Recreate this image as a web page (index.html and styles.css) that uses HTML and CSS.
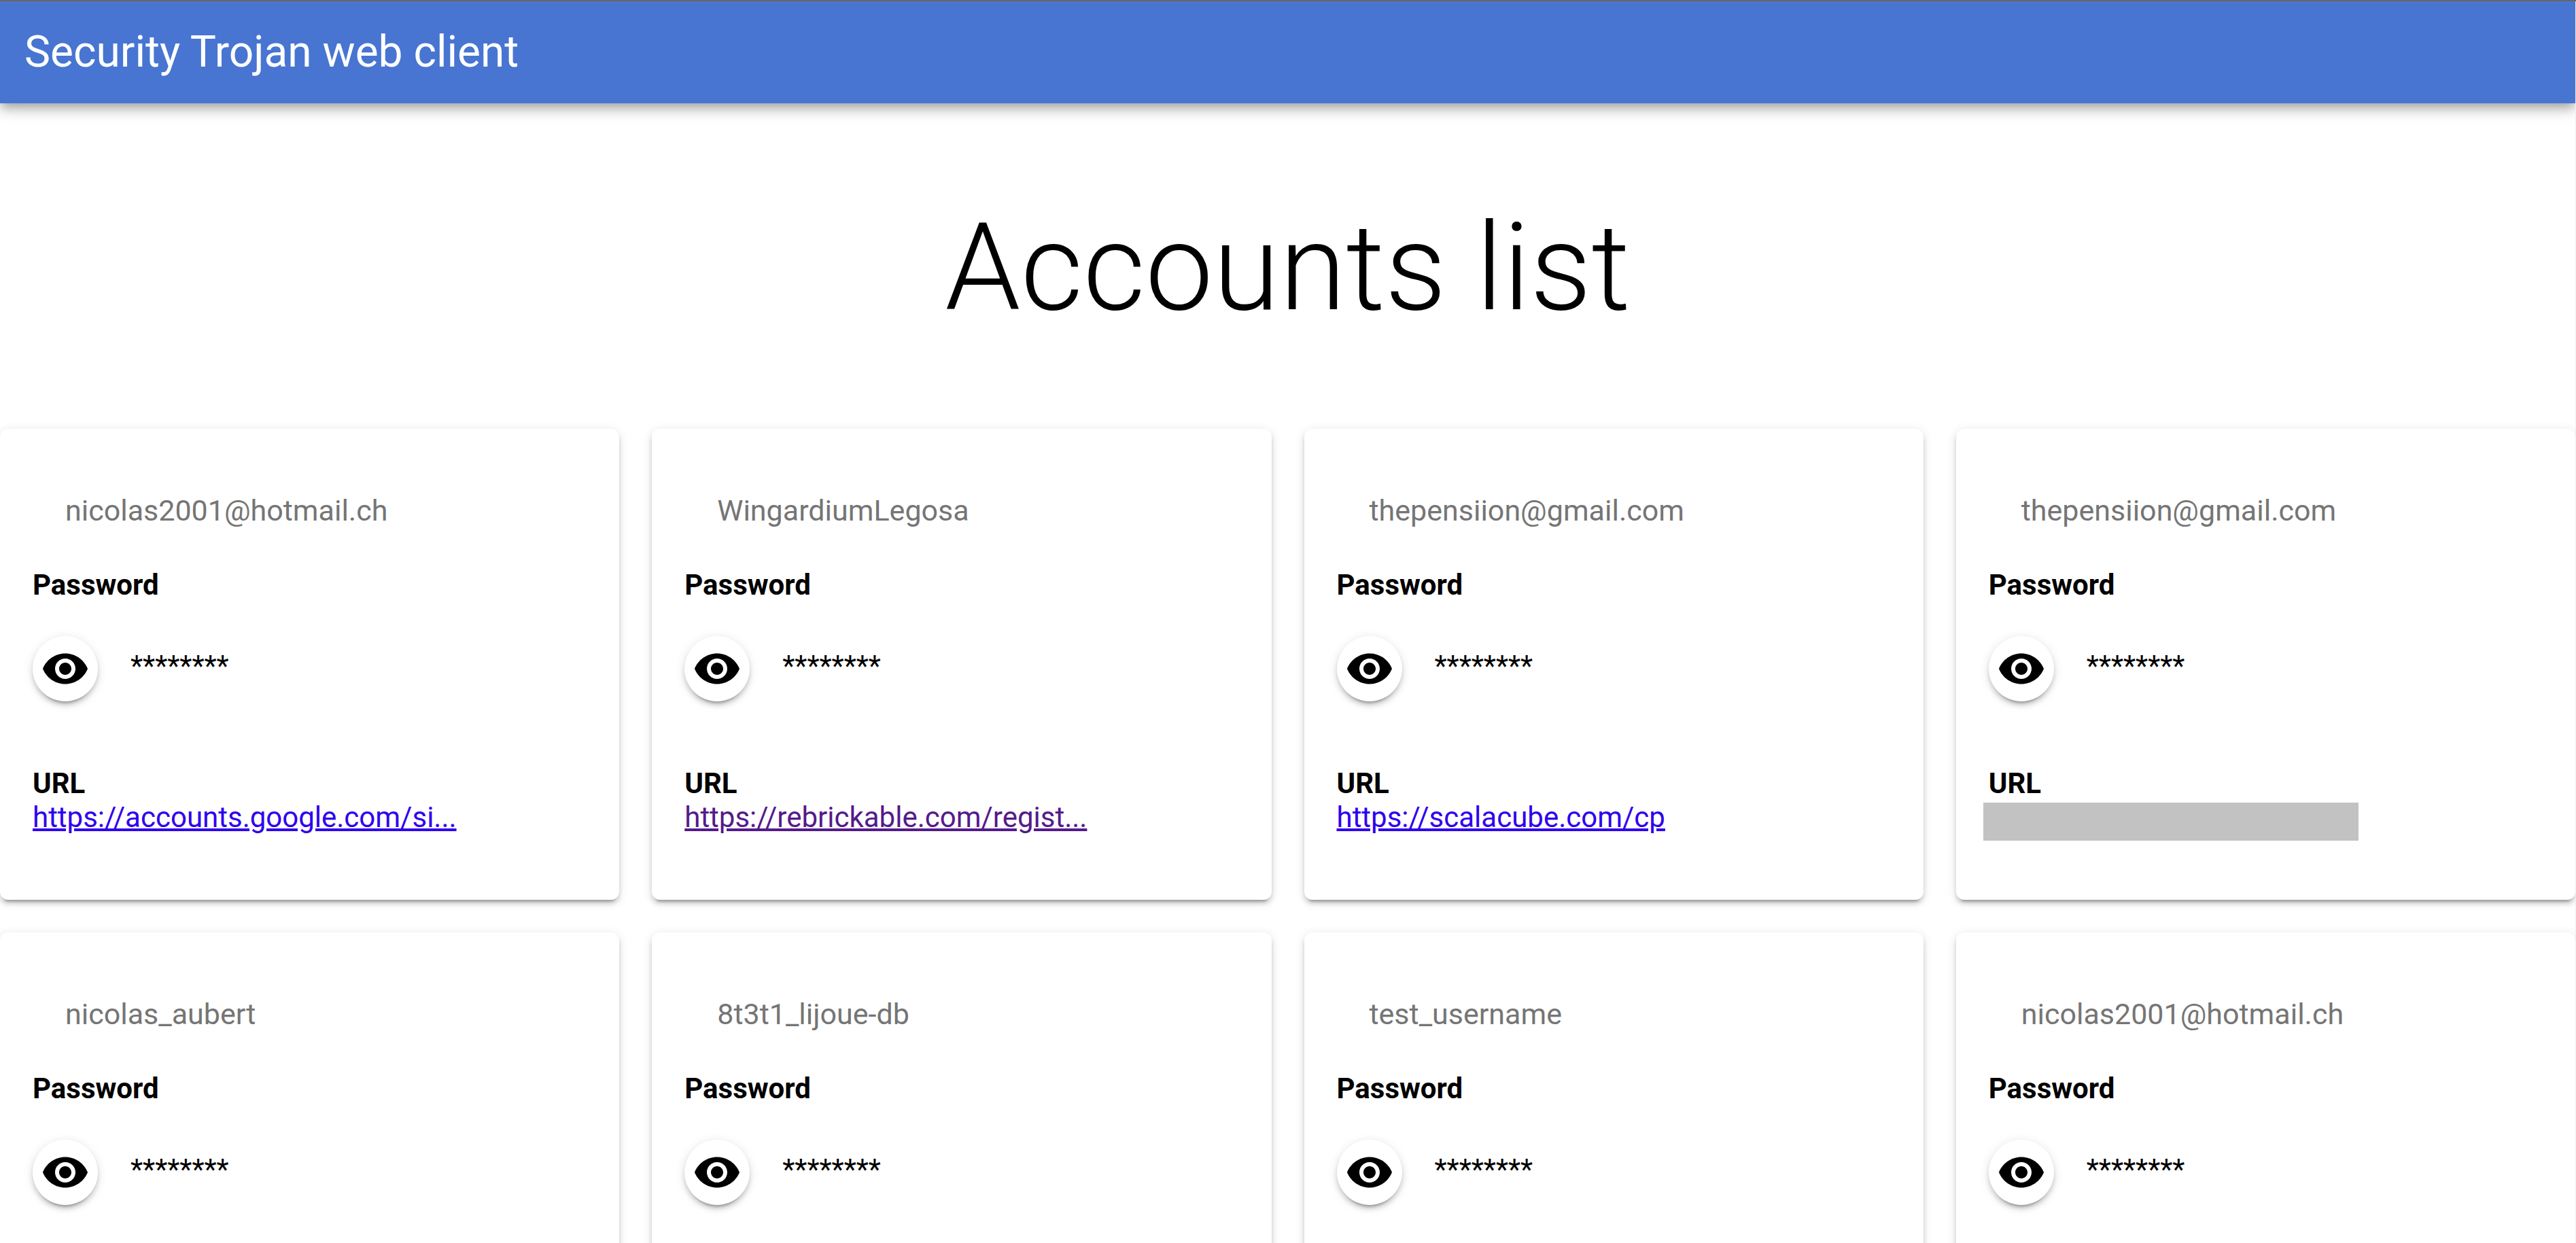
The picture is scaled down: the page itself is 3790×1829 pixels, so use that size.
FILE: index.html
```
<!DOCTYPE html>
<html lang="en">
<head>
<meta charset="utf-8">
<title>Security Trojan web client</title>
<link rel="stylesheet" href="styles.css">
</head>
<body>
<svg class="sprite" aria-hidden="true"><symbol id="eye" viewBox="0 0 24 24"><path d="M12 4.5C7 4.5 2.730 7.610 1 12c1.730 4.390 6 7.500 11 7.500s9.270-3.110 11-7.500c-1.730-4.390-6-7.500-11-7.500zM12 17c-2.760 0-5-2.240-5-5s2.240-5 5-5 5 2.240 5 5-2.240 5-5 5zm0-8c-1.660 0-3 1.340-3 3s1.340 3 3 3 3-1.340 3-3-1.340-3-3-3z"/></symbol></svg>
<div class="page">
<header class="app-bar"><span class="app-title">Security Trojan web client</span></header>
<main>
<h1 class="headline">Accounts list</h1>
<section class="accounts">
<article class="card"><h2 class="username">nicolas2001@hotmail.ch</h2><h3 class="label">Password</h3><div class="secret"><button class="reveal" type="button" aria-label="Show password"><svg><use href="#eye"/></svg></button><span>********</span></div><h3 class="label">URL</h3><a class="link" href="#">https://accounts.google.com/si...</a></article>
<article class="card"><h2 class="username">WingardiumLegosa</h2><h3 class="label">Password</h3><div class="secret"><button class="reveal" type="button" aria-label="Show password"><svg><use href="#eye"/></svg></button><span>********</span></div><h3 class="label">URL</h3><a class="link seen" href="#">https://rebrickable.com/regist...</a></article>
<article class="card"><h2 class="username">thepensiion@gmail.com</h2><h3 class="label">Password</h3><div class="secret"><button class="reveal" type="button" aria-label="Show password"><svg><use href="#eye"/></svg></button><span>********</span></div><h3 class="label">URL</h3><a class="link" href="#">https://scalacube.com/cp</a></article>
<article class="card"><h2 class="username">thepensiion@gmail.com</h2><h3 class="label">Password</h3><div class="secret"><button class="reveal" type="button" aria-label="Show password"><svg><use href="#eye"/></svg></button><span>********</span></div><h3 class="label">URL</h3><div class="redacted"></div></article>
<article class="card"><h2 class="username">nicolas_aubert</h2><h3 class="label">Password</h3><div class="secret"><button class="reveal" type="button" aria-label="Show password"><svg><use href="#eye"/></svg></button><span>********</span></div></article>
<article class="card"><h2 class="username">8t3t1_lijoue-db</h2><h3 class="label">Password</h3><div class="secret"><button class="reveal" type="button" aria-label="Show password"><svg><use href="#eye"/></svg></button><span>********</span></div></article>
<article class="card"><h2 class="username">test_username</h2><h3 class="label">Password</h3><div class="secret"><button class="reveal" type="button" aria-label="Show password"><svg><use href="#eye"/></svg></button><span>********</span></div></article>
<article class="card"><h2 class="username">nicolas2001@hotmail.ch</h2><h3 class="label">Password</h3><div class="secret"><button class="reveal" type="button" aria-label="Show password"><svg><use href="#eye"/></svg></button><span>********</span></div></article>
</section>
</main>
</div>
</body>
</html>
```
FILE: styles.css
```
* { box-sizing: border-box; }
body {
  margin: 0;
  height: 100vh;
  overflow: hidden;
  border-top: 2px solid #666;
  background: #fff;
  color: #000;
  font: 42px/50px Roboto, sans-serif;
}
.sprite { display: none; }
.page {
  height: 100%;
  overflow: hidden;
  border-right: 1px solid #f0f0f0;
}
.app-bar {
  display: flex;
  align-items: center;
  height: 150px;
  padding: 0 36px;
  background: #4775d1;
  color: #fff;
  box-shadow: 0 6px 12px -3px rgba(0, 0, 0, .2), 0 12px 15px rgba(0, 0, 0, .14), 0 3px 30px rgba(0, 0, 0, .12);
}
.app-title { font-size: 64px; line-height: 76px; }
h1, h2, h3 { margin: 0; }
.headline {
  padding: 122px 0 117px;
  font-size: 178px;
  font-weight: 300;
  line-height: 240px;
  text-align: center;
}
.accounts {
  display: grid;
  grid-template-columns: repeat(4, 1fr);
  grid-auto-rows: 1fr;
  gap: 48px;
}
.card {
  padding: 95px 48px 96px;
  border-radius: 12px;
  background: #fff;
  box-shadow: 0 9px 3px -6px rgba(0, 0, 0, .2), 0 6px 6px rgba(0, 0, 0, .14), 0 3px 15px rgba(0, 0, 0, .12);
}
.username {
  padding: 0 48px;
  margin-bottom: 60px;
  color: #757575;
  font-size: 43px;
  font-weight: 400;
}
.label { font-size: 42px; font-weight: 700; }
.secret {
  display: flex;
  gap: 48px;
  margin: 50px 0 96px;
}
.secret span { padding-top: 19px; }
.reveal {
  display: grid;
  place-items: center;
  width: 96px;
  height: 96px;
  padding: 0;
  border: 0;
  border-radius: 50%;
  background: #fff;
  color: #000;
  box-shadow: 0 9px 3px -6px rgba(0, 0, 0, .2), 0 6px 6px rgba(0, 0, 0, .14), 0 3px 15px rgba(0, 0, 0, .12);
}
.reveal svg { width: 72px; height: 72px; fill: currentColor; }
.link { color: #2f00ee; text-decoration-thickness: 4px; }
.link.seen { color: #551a8b; }
.redacted {
  width: 552px;
  height: 56px;
  margin: 3px -8px -9px;
  background: #c2c2c2;
}
```
